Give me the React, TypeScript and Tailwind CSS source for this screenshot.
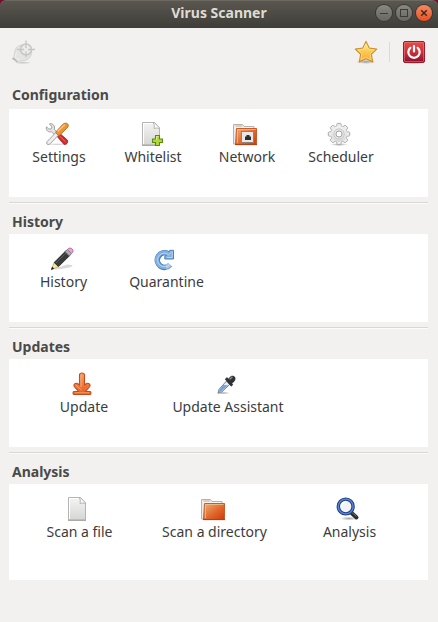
import type { ReactNode } from 'react';
import clsx from 'clsx';

interface IconProps {
  children: ReactNode;
}

interface Item {
  label: string;
  icon: ReactNode;
}

interface Section {
  title: string;
  cell: string;
  items: Item[];
}

const Icon = ({ children }: IconProps) => (
  <svg viewBox="0 0 24 24" className="block h-6 w-6" aria-hidden="true">
    {children}
  </svg>
);

// Gradients shared by all icons
const Gradients = () => (
  <svg className="absolute h-0 w-0" aria-hidden="true">
    <defs>
      <linearGradient id="paper" x1="0" y1="0" x2="0" y2="1">
        <stop offset="0" stopColor="#f4f4f3" />
        <stop offset="1" stopColor="#d6d6d5" />
      </linearGradient>
      <linearGradient id="folder" x1="0" y1="0" x2="1" y2="1">
        <stop offset="0" stopColor="#eeb27a" />
        <stop offset="0.55" stopColor="#e0682c" />
        <stop offset="1" stopColor="#cf3a0c" />
      </linearGradient>
      <linearGradient id="gold" x1="0" y1="0" x2="0" y2="1">
        <stop offset="0" stopColor="#fff0a0" />
        <stop offset="0.5" stopColor="#fcc850" />
        <stop offset="1" stopColor="#f9a33a" />
      </linearGradient>
      <linearGradient id="red" x1="0" y1="0" x2="0" y2="1">
        <stop offset="0" stopColor="#e4504c" />
        <stop offset="0.5" stopColor="#d0303a" />
        <stop offset="1" stopColor="#860f2e" />
      </linearGradient>
      <linearGradient id="arrow" x1="0" y1="0" x2="0" y2="1">
        <stop offset="0" stopColor="#f3a566" />
        <stop offset="1" stopColor="#e65a22" />
      </linearGradient>
      <linearGradient id="steel" x1="0" y1="0" x2="0" y2="1">
        <stop offset="0" stopColor="#f2f2f2" />
        <stop offset="1" stopColor="#d8d8d8" />
      </linearGradient>
      <radialGradient id="shadow">
        <stop offset="0" stopColor="#000" stopOpacity="0.35" />
        <stop offset="1" stopColor="#000" stopOpacity="0" />
      </radialGradient>
    </defs>
  </svg>
);

const TargetIcon = () => (
  <Icon>
    <ellipse cx="12" cy="22.8" rx="9" ry="1.2" fill="url(#shadow)" opacity="0.6" />
    <path
      d="M4 11 C5 6 9.500 4.500 14 5 C18.500 5.500 21.500 9 20.500 13.500 C19.500 18.500 14.500 21.500 9 21 L6.500 22.500 L5.500 20.800 L1 18.800 L2.800 17.500 C3.200 15.500 3.300 13.500 4 11 Z"
      fill="#e4e4e3"
      stroke="#cfcfce"
      strokeWidth="0.900"
    />
    <path d="M5.500 12 L4 18 L8.500 19.800" fill="none" stroke="#f0f0ef" />
    <path d="M1 18.500 L3.200 17.500 L6.500 21 L6.200 22.800 Z" fill="#bdbdbc" />
    <circle cx="15" cy="9.500" r="5.500" fill="#ebebea" stroke="#c6c6c5" strokeWidth="1.500" />
    <path d="M15 0.500 V8 M15 11.500 V17.500 M6 9.500 H13 M17 9.500 H24" stroke="#c6c6c5" strokeWidth="1.300" />
  </Icon>
);

const StarIcon = () => (
  <Icon>
    <ellipse cx="12" cy="21.8" rx="10" ry="2.2" fill="url(#shadow)" />
    <path
      d="M12 1.500 L15.200 8.100 L22.700 9.100 L17.300 14.300 L18.700 22 L12 18.800 L5.300 22 L6.700 14.300 L1.300 9.100 L8.800 8.100 Z"
      fill="url(#gold)"
      stroke="#c8922c"
      strokeWidth="1.200"
      strokeLinejoin="round"
    />
    <path
      d="M12 3.800 L14.500 9 L20.300 9.900 L16.200 13.900 L17.200 19.700 L12 17.300 L6.800 19.700 L7.800 13.900 L3.700 9.900 L9.500 9 Z"
      fill="none"
      stroke="#fff3b8"
      strokeWidth="0.700"
      opacity="0.700"
    />
  </Icon>
);

const PowerIcon = () => (
  <Icon>
    <ellipse cx="12" cy="22.800" rx="11" ry="1.200" fill="url(#shadow)" />
    <rect x="1.500" y="1.500" width="21" height="21" rx="1.500" fill="url(#red)" stroke="#a3182b" />
    <rect x="2.500" y="2.500" width="19" height="19" rx="0.500" fill="none" stroke="#ef8680" opacity="0.500" />
    <path d="M8.300 7.800 A5.700 5.700 0 1 0 15.700 7.800" fill="none" stroke="#fff" strokeWidth="2.200" strokeLinecap="round" />
    <path d="M12 6 V11.500" stroke="#fff" strokeWidth="2.200" strokeLinecap="round" />
  </Icon>
);

const ToolsIcon = () => (
  <Icon>
    <ellipse cx="12" cy="22.300" rx="11" ry="1.200" fill="url(#shadow)" opacity="0.600" />
    <path
      d="M4.500 1.800 L7 5 L6 7 L3.800 7 L1.400 4.800 C0.600 8.500 3.300 10.600 6.500 9.800 L11 14 L13.500 11.500 L9.300 7.300 C10.300 4 8 1 4.500 1.800 Z"
      fill="#e4e4e4"
      stroke="#9a9a9a"
      strokeWidth="0.900"
    />
    <path d="M11 13 L14 10.800 L22.300 18 C23.500 20.500 21.500 23.200 18.800 22.300 Z" fill="#d02c2e" stroke="#a01818" strokeWidth="0.800" />
    <path d="M14.500 14 L20.500 19.800" stroke="#ee7770" strokeWidth="0.900" />
    <path
      d="M12 9.200 L14.800 11.800 L6.800 20 C5.500 22.500 3 23 2 22 C1 20.800 2 18.800 4.300 17.500 Z"
      fill="#efefef"
      stroke="#9a9a9a"
      strokeWidth="0.900"
    />
    <path d="M11.200 9.500 L18 2.200 C20.500 0 24.500 1.500 22.900 5 L15.300 12.800 C14 14 9.800 11.500 11.200 9.500 Z" fill="#e9963a" stroke="#bd6a1c" strokeWidth="0.900" />
    <path d="M13 9 L19.500 2.900" stroke="#f8c680" strokeWidth="1.400" strokeLinecap="round" />
  </Icon>
);

const Paper = () => (
  <>
    <path d="M2.500 0.500 H14.500 L19.500 6 V23 H2.500 Z" fill="url(#paper)" stroke="#b4b4b4" />
    <path d="M3.500 22 V1.500 H13.500" stroke="#fff" fill="none" />
    <path d="M13.500 1 C14.600 3 14.300 5 14 6.500 C16 5.800 17.800 6 19.400 6.500 L19.400 5.800 L14.500 0.800 Z" fill="#fdfdfd" stroke="#a5a5a5" strokeWidth="0.800" />
    <path d="M2 23.300 H20" stroke="#9e9e9e" />
  </>
);

const FileIcon = () => (
  <Icon>
    <Paper />
  </Icon>
);

const FileAddIcon = () => (
  <Icon>
    <g transform="translate(1 0)">
      <Paper />
    </g>
    <path
      d="M16.500 13.500 H20.500 V17 H23.500 V20.500 H20.500 V23.500 H16.500 V20.500 H13.500 V17 H16.500 Z"
      fill="#b3d63c"
      stroke="#568a10"
      strokeWidth="1.100"
      strokeLinejoin="round"
    />
    <path d="M17.500 18 V14.500 H19.500" fill="none" stroke="#e2f29a" strokeWidth="0.900" />
  </Icon>
);

const Folder = () => (
  <>
    <path d="M0.500 22 V2.500 H9.500 L11 4.500 H21 V22 Z" fill="#ececec" stroke="#b3b3b3" />
    <path d="M2.500 4 H9" stroke="#e8a77c" />
    <path d="M2.500 6 H20" stroke="#fff" />
    <path d="M3.500 6.500 H23.500 V22.500 H2.500 Z" fill="url(#folder)" stroke="#cb5a28" />
    <path d="M4.500 21 V7.500 H22.500" fill="none" stroke="#f3bf92" opacity="0.800" />
    <path d="M2 22.600 H24" stroke="#b83c10" />
  </>
);

const FolderIcon = () => (
  <Icon>
    <Folder />
  </Icon>
);

const NetworkFolderIcon = () => (
  <Icon>
    <Folder />
    <rect x="8.500" y="9.500" width="12" height="11" fill="#e9e8e7" stroke="#8f817a" />
    <path d="M12 18 V14.500 H13.500 V13 H16.500 V14.500 H18 V18 Z" fill="#2c2c2c" />
  </Icon>
);

const GearIcon = () => (
  <Icon>
    <ellipse cx="12" cy="22.500" rx="9" ry="1.500" fill="url(#shadow)" />
    {/* teeth are drawn first so the wheel hides their inner ends */}
    {[0, 45, 90, 135, 180, 225, 270, 315].map((angle) => (
      <path
        key={angle}
        d="M8.900 5.500 C9.800 4.300 9.600 3 10 1.900 Q10.200 1.300 10.900 1.300 H13.100 Q13.800 1.300 14 1.900 C14.400 3 14.200 4.300 15.100 5.500 Z"
        transform={`rotate(${angle} 12 12)`}
        fill="#ececec"
        stroke="#a3a3a3"
        strokeWidth="0.900"
      />
    ))}
    <circle cx="12" cy="12" r="8" fill="url(#steel)" />
    <circle cx="12" cy="12" r="5.200" fill="#e4e4e4" stroke="#c6c6c6" strokeWidth="0.900" />
    <circle cx="12" cy="12" r="3" fill="#fff" stroke="#9a9a9a" strokeWidth="0.900" />
  </Icon>
);

const PencilIcon = () => (
  <Icon>
    <path d="M3 22.500 L17 17.500 Q24 17.500 22 19.500 Q15 22 3 22.500 Z" fill="#000" opacity="0.150" />
    <path d="M4.200 15.500 L8.500 19.600 L1.300 22.800 Z" fill="#f7e9a0" stroke="#a99a4e" strokeWidth="0.700" />
    <path d="M1 23 L2 19.800 L4.300 21.600 Z" fill="#1e1e1e" />
    <path d="M4.200 15.500 L16 3.700 L20.300 8 L8.500 19.600 Z" fill="#3a3c3c" stroke="#1c1c1c" strokeWidth="0.800" />
    <path d="M6 16 L17 5" stroke="#565a5a" strokeWidth="1" />
    <path d="M15 4.700 L18 2 L22 6 L19.300 9 Z" fill="#a9acac" stroke="#6d6d6d" strokeWidth="0.700" />
    <path d="M17.500 2.500 C19 0.500 21 0.800 22.200 1.900 C23.500 3.200 23.500 5 21.500 6.500 Z" fill="#e5a4d2" stroke="#a3628e" strokeWidth="0.800" />
  </Icon>
);

const RefreshIcon = () => (
  <Icon>
    <g transform="translate(-1 0)">
      <path d="M18.200 17.800 A7.300 7.300 0 1 1 16.200 6.700" fill="none" stroke="#4a80bd" strokeWidth="5.600" />
      <path d="M17.800 3.300 H21.500 V12 H12.800 V9.300 L15.500 7.500 Z" fill="#82b1e0" stroke="#4a80bd" strokeLinejoin="round" />
      <path d="M17.800 17.500 A7.300 7.300 0 1 1 16.800 7.200" fill="none" stroke="#82b1e0" strokeWidth="3.900" />
      <path d="M17.500 17.500 A6.800 6.800 0 1 1 16.800 7.800 L20.300 4.500 V10.500 H15" fill="none" stroke="#b5d2f0" strokeWidth="1" />
      <path d="M14 16 L21 15 L20 21.500 L14 23 Z" fill="#fff" opacity="0.300" />
    </g>
  </Icon>
);

const DownloadIcon = () => (
  <Icon>
    <path
      d="M9.500 3 Q9.500 1 12 1 Q14.500 1 14.500 3 V13 L16.500 11.500 C18.500 10.500 21 12.500 19.800 14.500 L15.500 19.500 H20 Q21 19.500 21 21 Q21 22.500 20 22.500 H4 Q3 22.500 3 21 Q3 19.500 4 19.500 H8.500 L4.200 14.500 C3 12.500 5.500 10.500 7.500 11.500 L9.500 13 Z"
      fill="url(#arrow)"
      stroke="#c94a18"
      strokeWidth="1.100"
      strokeLinejoin="round"
    />
    <path d="M11 3 V15 M5.500 13 L11.500 18 M4.500 20.800 H19.500" fill="none" stroke="#f8bd8e" strokeWidth="0.700" />
  </Icon>
);

const DropperIcon = () => (
  <Icon>
    <ellipse cx="9" cy="21" rx="7" ry="1.500" fill="url(#shadow)" />
    <path d="M12.500 9 L15.800 12.300 L8 19.800 L4 21.200 L5 17.300 Z" fill="#e2eaf2" stroke="#6c7683" strokeWidth="0.900" />
    <path d="M9.200 13 L14 13.200 L7.600 19.300 L4.700 20.300 L5.600 17.500 Z" fill="#73a5dc" />
    <path
      d="M11.200 7.200 L13 5.600 L14.500 7 L16.200 5 C18.500 3 22.200 4.500 20.800 8.200 C20 10 18.500 10.500 17.800 11.200 L18.800 12.800 L17.200 14.200 Z"
      fill="#2f3133"
      stroke="#1b1c1d"
      strokeWidth="0.600"
    />
    <path d="M16 7 L18 5.200" stroke="#8b8f92" strokeWidth="1.400" strokeLinecap="round" />
  </Icon>
);

const MagnifierIcon = () => (
  <Icon>
    <ellipse cx="13" cy="21.500" rx="9" ry="2" fill="url(#shadow)" />
    <path d="M14.500 15 L20.500 20.500" stroke="#2a2c2b" strokeWidth="4" strokeLinecap="round" />
    <path d="M15.800 15.400 L20.500 19.500" stroke="#7d7f7b" strokeWidth="0.900" />
    <circle cx="9.700" cy="9.500" r="7.400" fill="#f2f3f4" stroke="#1f3f88" strokeWidth="3.400" />
    <circle cx="9.700" cy="9.500" r="7.400" fill="none" stroke="#5c86d2" strokeWidth="1.400" />
    <path d="M5.500 9 A4.500 4.500 0 0 1 10 5.200" fill="none" stroke="#fff" strokeWidth="1.300" />
  </Icon>
);

const sections: Section[] = [
  {
    title: 'Configuration',
    cell: 'w-[94px]',
    items: [
      { label: 'Settings', icon: <ToolsIcon /> },
      { label: 'Whitelist', icon: <FileAddIcon /> },
      { label: 'Network', icon: <NetworkFolderIcon /> },
      { label: 'Scheduler', icon: <GearIcon /> },
    ],
  },
  {
    title: 'History',
    cell: 'w-[103px]',
    items: [
      { label: 'History', icon: <PencilIcon /> },
      { label: 'Quarantine', icon: <RefreshIcon /> },
    ],
  },
  {
    title: 'Updates',
    cell: 'w-[144px]',
    items: [
      { label: 'Update', icon: <DownloadIcon /> },
      { label: 'Update Assistant', icon: <DropperIcon /> },
    ],
  },
  {
    title: 'Analysis',
    cell: 'w-[135px]',
    items: [
      { label: 'Scan a file', icon: <FileIcon /> },
      { label: 'Scan a directory', icon: <FolderIcon /> },
      { label: 'Analysis', icon: <MagnifierIcon /> },
    ],
  },
];

const windowButton =
  'flex h-4 w-4 items-center justify-center rounded-full ring-1 ring-[#383732] bg-linear-to-b from-[#8a8882] to-[#686660]';

const TitleBar = () => (
  <div className="bg-[#6d1330]">
    <header className="grid h-7 grid-cols-[1fr_auto_1fr] items-center rounded-t-md border-t border-[#6b6960] bg-linear-to-b from-[#59574f] to-[#3e3d38] px-1.5 pb-[3px]">
      <h1 className="col-start-2 text-sm font-bold text-[#dfdbd2]">Virus Scanner</h1>
      <div className="flex justify-end gap-1">
        <button type="button" aria-label="Minimize" className={windowButton}>
          <svg viewBox="0 0 16 16" className="h-4 w-4">
            <path d="M4 8.500 H12" stroke="#3c3b37" />
          </svg>
        </button>
        <button type="button" aria-label="Maximize" className={windowButton}>
          <svg viewBox="0 0 16 16" className="h-4 w-4">
            <rect x="4.500" y="4.500" width="7" height="7" fill="none" stroke="#3c3b37" />
          </svg>
        </button>
        <button
          type="button"
          aria-label="Close"
          className="flex h-4 w-4 items-center justify-center rounded-full bg-linear-to-b from-[#f58860] to-[#e9501f] ring-1 ring-[#383732]"
        >
          <svg viewBox="0 0 16 16" className="h-4 w-4">
            <path d="M5.200 5.200 L10.800 10.800 M10.800 5.200 L5.200 10.800" stroke="#3c2a20" strokeWidth="1.500" />
          </svg>
        </button>
      </div>
    </header>
  </div>
);

const App = () => (
  <div className="min-h-screen bg-[#f2f1ef] font-['Noto_Sans',sans-serif] text-[#3c3c3c]">
    <Gradients />
    <TitleBar />

    <div className="flex items-center pt-3 pr-3 pb-[21px] pl-[11px]">
      <button type="button" aria-label="Scan" disabled className="mr-auto">
        <TargetIcon />
      </button>
      <button type="button" aria-label="Favorites">
        <StarIcon />
      </button>
      <div className="mr-3 ml-[11px] h-5 w-px bg-[#dcdad7]" />
      <button type="button" aria-label="Quit">
        <PowerIcon />
      </button>
    </div>

    <main className="pr-2.5 pl-[9px]">
      {sections.map(({ title, cell, items }, index) => {
        const isLast = index === sections.length - 1;
        return (
          <section key={title}>
            <h2 className={clsx('px-[3px] text-sm leading-5 font-bold text-[#4a4a4a]', index === 0 ? 'pb-1' : 'pt-2 pb-0.5')}>{title}</h2>
            <div className={clsx('flex bg-white px-[3px] pt-[13px]', isLast ? 'h-24' : 'h-[88px]')}>
              {items.map((item) => (
                <button key={item.label} type="button" className={clsx('flex shrink-0 flex-col items-center', cell)}>
                  <span className="pr-1">{item.icon}</span>
                  <span className="text-sm leading-[22px] whitespace-nowrap">{item.label}</span>
                </button>
              ))}
            </div>
            {!isLast && <hr className="mt-[5px] h-0.5 border-t border-b border-t-[#d9d7d4] border-b-[#fbfbfa]" />}
          </section>
        );
      })}
    </main>
  </div>
);

export default App;
